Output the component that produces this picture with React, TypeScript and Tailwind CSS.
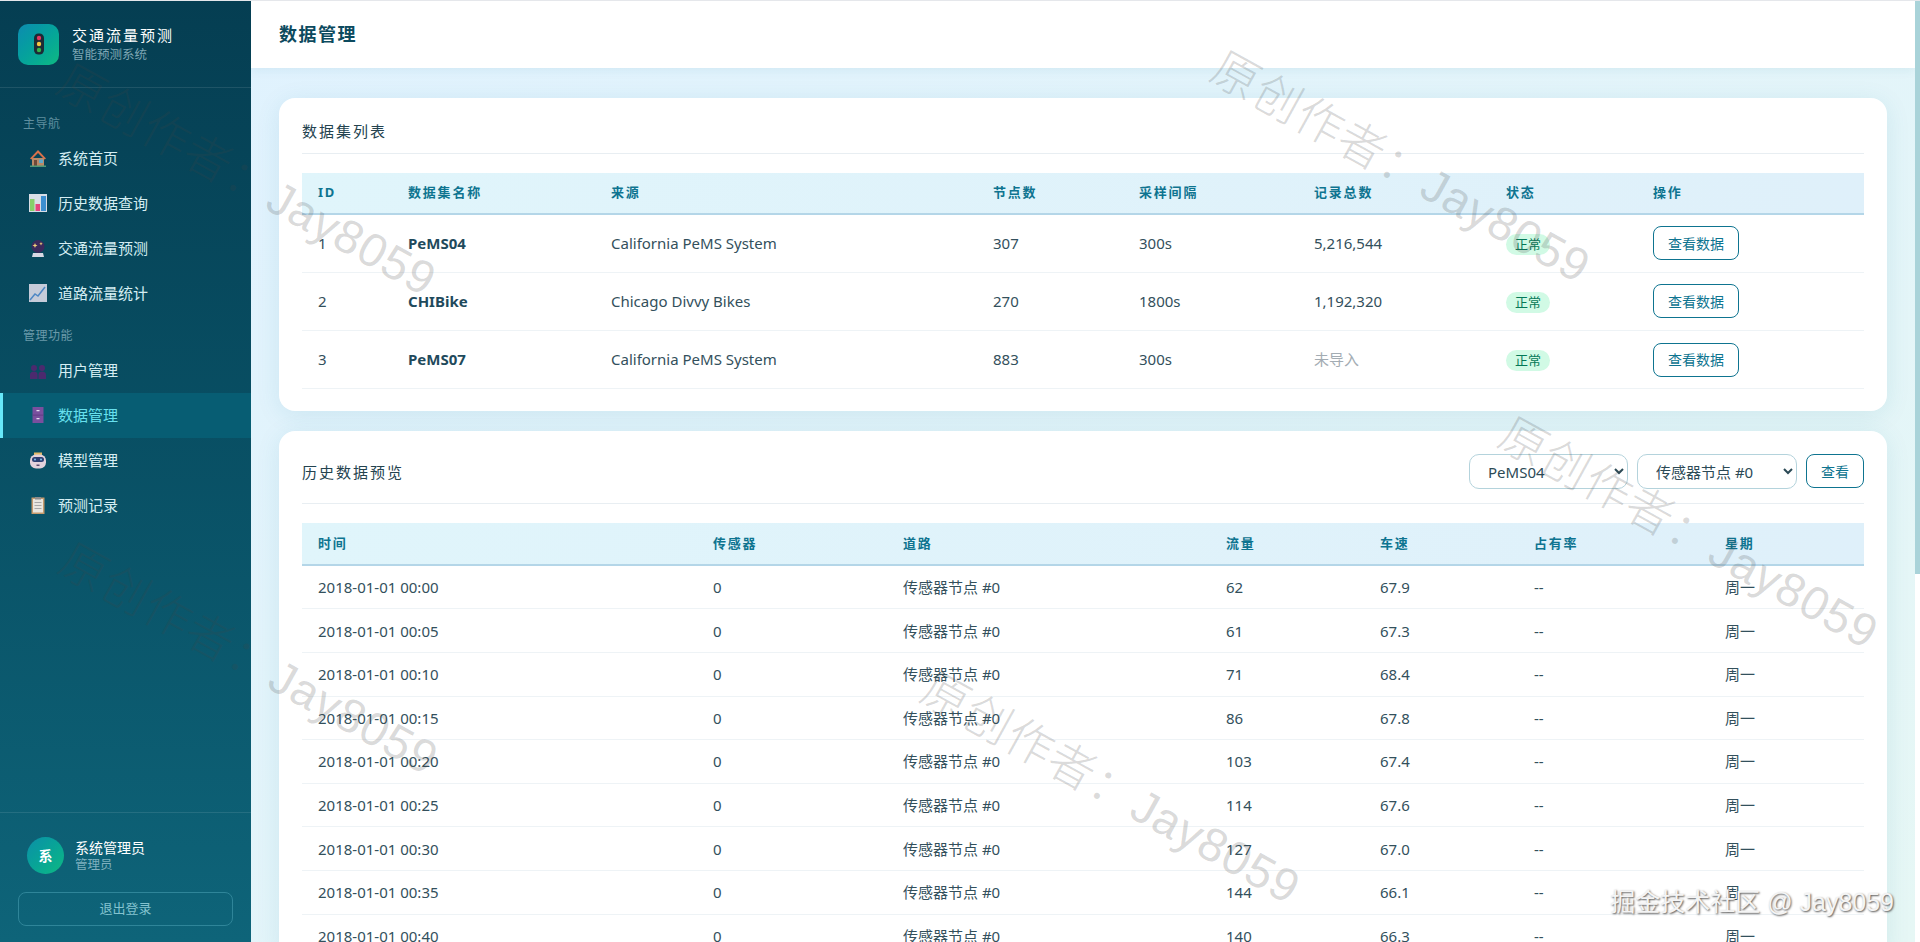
import type { ReactNode } from 'react';

const navMain: { label: string; icon: ReactNode }[] = [
  { label: '系统首页', icon: <HouseIcon /> },
  { label: '历史数据查询', icon: <BarsIcon /> },
  { label: '交通流量预测', icon: <BallIcon /> },
  { label: '道路流量统计', icon: <TrendIcon /> },
];

const navAdmin: { label: string; icon: ReactNode; active?: boolean }[] = [
  { label: '用户管理', icon: <UsersIcon /> },
  { label: '数据管理', icon: <CabinetIcon />, active: true },
  { label: '模型管理', icon: <RobotIcon /> },
  { label: '预测记录', icon: <ClipboardIcon /> },
];

const datasets = [
  { id: 1, name: 'PeMS04', source: 'California PeMS System', nodes: 307, interval: '300s', total: '5,216,544' },
  { id: 2, name: 'CHIBike', source: 'Chicago Divvy Bikes', nodes: 270, interval: '1800s', total: '1,192,320' },
  { id: 3, name: 'PeMS07', source: 'California PeMS System', nodes: 883, interval: '300s', total: '' },
];

const history = [
  ['00:00', 62, '67.9'],
  ['00:05', 61, '67.3'],
  ['00:10', 71, '68.4'],
  ['00:15', 86, '67.8'],
  ['00:20', 103, '67.4'],
  ['00:25', 114, '67.6'],
  ['00:30', 127, '67.0'],
  ['00:35', 144, '66.1'],
  ['00:40', 140, '66.3'],
];

const watermarks = [
  'left-[78px] top-[46px]',
  'left-[80px] top-[525px]',
  'left-[1232px] top-[33px]',
  'left-[1520px] top-[399px]',
  'left-[942px] top-[654px]',
];

function HouseIcon() {
  return (
    <svg viewBox="0 0 18 18" className="h-[18px] w-[18px]">
      <path d="M3 9h12v8H3z" fill="#b98a68" />
      <path d="M9 1 1 9.500l1.500 1L9 4l6.500 6.500 1.500-1z" fill="#d9714a" />
      <path d="M5 11h3v6H5z" fill="#6d4a3a" />
      <path d="M10 10.500h4v3.500h-4z" fill="#5fa9c9" />
      <path d="M1 16.500h16V18H1z" fill="#4f9a78" />
    </svg>
  );
}

function BarsIcon() {
  return (
    <svg viewBox="0 0 18 18" className="h-[18px] w-[18px]">
      <path d="M0 0h18v18H0z" fill="#d9dee6" />
      <path d="M1 5h4.500v12H1z" fill="#86cf6a" />
      <path d="M6.500 10H11v7H6.500z" fill="#e4447e" />
      <path d="M12 2h5v15h-5z" fill="#3d8fd0" />
    </svg>
  );
}

function BallIcon() {
  return (
    <svg viewBox="0 0 18 18" className="h-[18px] w-[18px]">
      <circle cx="9" cy="7.500" r="6.500" fill="#3b2a5c" />
      <path d="M4 14h10l1 4H3z" fill="#d7d9e4" />
      <path d="M6 4l.7 1.800L8.500 6.500l-1.800.7L6 9l-.7-1.800-1.800-.7 1.800-.7zM12 3l.5 1.200 1.200.5-1.200.5-.5 1.200-.5-1.200-1.200-.5 1.200-.5z" fill="#f3d27a" />
    </svg>
  );
}

function TrendIcon() {
  return (
    <svg viewBox="0 0 18 18" className="h-[18px] w-[18px]">
      <path d="M0 0h18v18H0z" fill="#c5cbd9" />
      <path d="M1 16 6 10l3 2 7-9" fill="none" stroke="#4d86c4" strokeWidth="1.500" />
    </svg>
  );
}

function UsersIcon() {
  return (
    <svg viewBox="0 0 18 18" className="h-[18px] w-[18px]">
      <circle cx="5" cy="6" r="3" fill="#4b2a6e" />
      <circle cx="13" cy="6" r="3" fill="#4b2a6e" />
      <path d="M1 17v-4.500C1 10.500 3 9.500 5 9.500s3.500 1 3.500 3V17zM9.500 17v-4.500c0-2 1.500-3 3.500-3s4 1 4 3V17z" fill="#4b2a6e" />
    </svg>
  );
}

function CabinetIcon() {
  return (
    <svg viewBox="0 0 18 18" className="h-[18px] w-[18px]">
      <path d="M3.500 1h11v16h-11z" fill="#7a4f9e" />
      <path d="M3.500 8.700h11v.8h-11z" fill="#5b3a7c" />
      <path d="M7.500 4h3v1.200h-3zM7.500 12h3v1.200h-3z" fill="#e4dcef" />
    </svg>
  );
}

function RobotIcon() {
  return (
    <svg viewBox="0 0 18 18" className="h-[18px] w-[18px]">
      <path d="M5 1.500h8V5H5z" fill="#e0b96a" />
      <rect x="1" y="3.500" width="16" height="14" rx="6" fill="#e3d2dc" />
      <rect x="3" y="6" width="12" height="5" rx="2.500" fill="#2e3f73" />
      <circle cx="6" cy="8.500" r="1" fill="#7fc6ee" />
      <circle cx="12" cy="8.500" r="1" fill="#7fc6ee" />
      <path d="M7.500 13.500h3v1.500h-3z" fill="#5b4a6e" />
    </svg>
  );
}

function ClipboardIcon() {
  return (
    <svg viewBox="0 0 18 18" className="h-[18px] w-[18px]">
      <path d="M2.500 1.500h13V18h-13z" fill="#c69a6c" />
      <path d="M4 3h10v13.500H4z" fill="#e9e6df" />
      <path d="M6 1h6v2.500H6z" fill="#8d8d8d" />
      <path d="M5.500 6h7v1h-7zM5.500 9h7v1h-7zM5.500 12h7v1h-7z" fill="#a7a7a7" />
    </svg>
  );
}

function NavItem({ label, icon, active }: { label: string; icon: ReactNode; active?: boolean }) {
  return (
    <div
      className={
        active
          ? 'flex h-[44.800px] items-center gap-[11px] border-l-[3px] border-[#67e8f9] bg-[#075d73] pl-[26px] text-[15px] text-[#67e0ee]'
          : 'flex h-[44.800px] items-center gap-[11px] border-l-[3px] border-transparent pl-[26px] text-[15px] text-[#d5eef3]'
      }
    >
      {icon}
      <span>{label}</span>
    </div>
  );
}

function Sidebar() {
  return (
    <aside className="flex h-full w-[251px] shrink-0 flex-col bg-gradient-to-b from-[#053e52] to-[#0e6479]">
      <div className="flex h-[87px] items-center gap-[13px] border-b border-white/10 pl-[18px]">
        <div className="flex h-[41px] w-[41px] items-center justify-center rounded-[10px] bg-gradient-to-br from-[#0e8bb0] to-[#10b981]">
          <svg viewBox="0 0 12 22" className="h-[22px] w-[12px]">
            <rect x="1" y="0.500" width="10" height="21" rx="4.500" fill="#1c2b36" />
            <circle cx="6" cy="5" r="2.200" fill="#e5375f" />
            <circle cx="6" cy="11" r="2.200" fill="#f5c542" />
            <circle cx="6" cy="17" r="2.200" fill="#35b34a" />
          </svg>
        </div>
        <div>
          <div className="text-[15px] leading-[20px] tracking-[2px] text-white">交通流量预测</div>
          <div className="text-[12.500px] leading-[19px] text-[#7fa7b4]">智能预测系统</div>
        </div>
      </div>

      <div className="pl-[23px] pt-[27px] text-[12px] leading-[18px] tracking-[0.500px] text-[#5f8e9e]">主导航</div>
      <nav className="mt-[3px]">
        {navMain.map((item) => (
          <NavItem key={item.label} label={item.label} icon={item.icon} />
        ))}
      </nav>

      <div className="pl-[23px] pt-[12px] text-[12px] leading-[18px] tracking-[0.500px] text-[#6b9aaa]">管理功能</div>
      <nav className="mt-[3px]">
        {navAdmin.map((item) => (
          <NavItem key={item.label} label={item.label} icon={item.icon} active={item.active} />
        ))}
      </nav>

      <div className="mt-auto border-t border-white/10 px-[18px] pb-[16px] pt-[24px]">
        <div className="flex items-center gap-[11px] pl-[9px]">
          <div className="flex h-[37px] w-[37px] items-center justify-center rounded-full bg-gradient-to-br from-[#0e8fa8] to-[#10b981] text-[14px] font-bold text-white">
            系
          </div>
          <div>
            <div className="text-[14px] leading-[18px] text-white">系统管理员</div>
            <div className="text-[12.500px] leading-[16px] text-[#7fb0bf]">管理员</div>
          </div>
        </div>
        <button className="mt-[18px] h-[34px] w-full rounded-[8px] border border-[#2f8599] text-[13px] text-[#84c3d0]">
          退出登录
        </button>
      </div>
    </aside>
  );
}

function Th({ children }: { children: ReactNode }) {
  return <th className="px-4 text-left text-[13px] font-bold tracking-[1.800px] text-[#0e7490]">{children}</th>;
}

function DatasetCard() {
  return (
    <section className="rounded-[16px] bg-white px-[23px] pb-[22px] pt-[12px] shadow-[0_4px_24px_rgba(14,116,144,0.1)]">
      <div className="flex h-[44px] items-center border-b border-[#e8eef2] text-[15px] tracking-[2px] text-[#24434f]">
        数据集列表
      </div>
      <table className="mt-[19px] w-full table-fixed border-collapse text-[15px] text-[#33505c]">
        <colgroup>
          <col className="w-[90px]" />
          <col className="w-[203px]" />
          <col className="w-[382px]" />
          <col className="w-[146px]" />
          <col className="w-[175px]" />
          <col className="w-[192px]" />
          <col className="w-[147px]" />
          <col />
        </colgroup>
        <thead>
          <tr className="h-[41px] border-b-2 border-[#b4d6e8] bg-gradient-to-r from-[#e0f5fb] to-[#dff0fa]">
            <Th>ID</Th>
            <Th>数据集名称</Th>
            <Th>来源</Th>
            <Th>节点数</Th>
            <Th>采样间隔</Th>
            <Th>记录总数</Th>
            <Th>状态</Th>
            <Th>操作</Th>
          </tr>
        </thead>
        <tbody>
          {datasets.map((d) => (
            <tr key={d.id} className="h-[58.300px] border-b border-[#eef3f6]">
              <td className="px-4">{d.id}</td>
              <td className="px-4 font-bold text-[#1f4a5c]">{d.name}</td>
              <td className="px-4">{d.source}</td>
              <td className="px-4">{d.nodes}</td>
              <td className="px-4">{d.interval}</td>
              <td className="px-4">{d.total || <span className="text-[#a3acb3]">未导入</span>}</td>
              <td className="px-4">
                <span className="inline-block h-[21px] rounded-full bg-[#d1fae5] px-[9px] text-[13px] leading-[21px] text-[#047857]">
                  正常
                </span>
              </td>
              <td className="px-4">
                <button className="h-[34px] w-[86px] rounded-[8px] border border-[#0e7490] text-[14px] text-[#0e7490]">
                  查看数据
                </button>
              </td>
            </tr>
          ))}
        </tbody>
      </table>
    </section>
  );
}

function HistoryCard() {
  return (
    <section className="mt-[20px] rounded-[16px] bg-white px-[23px] pt-[23px] shadow-[0_4px_24px_rgba(14,116,144,0.1)]">
      <div className="flex h-[50px] items-start justify-between border-b border-[#e8eef2]">
        <div className="flex h-[35px] items-center text-[15px] tracking-[2px] text-[#24434f]">历史数据预览</div>
        <div className="flex items-start gap-[9px]">
          <select className="h-[35px] w-[159px] rounded-[10px] border border-[#b4d3dc] px-[14px] text-[15px] text-[#2c4a56]">
            <option>PeMS04</option>
          </select>
          <select className="h-[35px] w-[160px] rounded-[10px] border border-[#b4d3dc] px-[14px] text-[15px] text-[#2c4a56]">
            <option>传感器节点 #0</option>
          </select>
          <button className="h-[34px] w-[58px] rounded-[8px] border border-[#0e7490] text-[14px] text-[#0e7490]">
            查看
          </button>
        </div>
      </div>
      <table className="mt-[19px] w-full table-fixed border-collapse text-[15px] text-[#33505c]">
        <colgroup>
          <col className="w-[395px]" />
          <col className="w-[190px]" />
          <col className="w-[323px]" />
          <col className="w-[154px]" />
          <col className="w-[154px]" />
          <col className="w-[191px]" />
          <col />
        </colgroup>
        <thead>
          <tr className="h-[42px] border-b-2 border-[#b4d6e8] bg-gradient-to-r from-[#e0f5fb] to-[#dff0fa]">
            <Th>时间</Th>
            <Th>传感器</Th>
            <Th>道路</Th>
            <Th>流量</Th>
            <Th>车速</Th>
            <Th>占有率</Th>
            <Th>星期</Th>
          </tr>
        </thead>
        <tbody>
          {history.map(([time, flow, speed]) => (
            <tr key={time} className="h-[43.600px] border-b border-[#eef3f6]">
              <td className="px-4">2018-01-01 {time}</td>
              <td className="px-4">0</td>
              <td className="px-4">传感器节点 #0</td>
              <td className="px-4">{flow}</td>
              <td className="px-4">{speed}</td>
              <td className="px-4">--</td>
              <td className="px-4">周一</td>
            </tr>
          ))}
        </tbody>
      </table>
    </section>
  );
}

export default function App() {
  return (
    <div className="relative flex h-screen overflow-hidden border-t border-[#e5e7eb] bg-white [font-family:'Noto_Sans','Noto_Sans_CJK_SC',sans-serif]">
      <Sidebar />

      <main className="min-w-0 flex-1 overflow-hidden bg-gradient-to-br from-[#e0f2fe] to-[#e6f7f5]">
        <header className="flex h-[67px] items-center bg-white pl-[28px] shadow-[0_2px_10px_rgba(14,116,144,0.08)]">
          <h1 className="text-[18px] font-bold tracking-[1.500px] text-[#0c4a5e]">数据管理</h1>
        </header>
        <div className="px-[28px] pt-[30px]">
          <DatasetCard />
          <HistoryCard />
        </div>
      </main>

      {/* page scrollbar */}
      <div className="w-[5px] shrink-0 bg-white">
        <div className="h-[573px] bg-[#a9d3d9]" />
      </div>

      {/* diagonal watermarks */}
      {watermarks.map((pos) => (
        <div
          key={pos}
          className={`pointer-events-none absolute ${pos} origin-top-left rotate-[29deg] whitespace-nowrap text-[47px] font-light tracking-[1px] text-[#444444]/20 [font-family:'Liberation_Sans','Noto_Sans_CJK_SC',sans-serif]`}
        >
          原创作者：Jay8059
        </div>
      ))}

      <div className="pointer-events-none absolute bottom-[21px] right-[26px] whitespace-nowrap text-[25px] text-[#f4f4f4] [font-family:'Liberation_Sans','Noto_Sans_CJK_SC',sans-serif] [text-shadow:1px_1px_2px_#555]">
        掘金技术社区 @ Jay8059
      </div>
    </div>
  );
}
